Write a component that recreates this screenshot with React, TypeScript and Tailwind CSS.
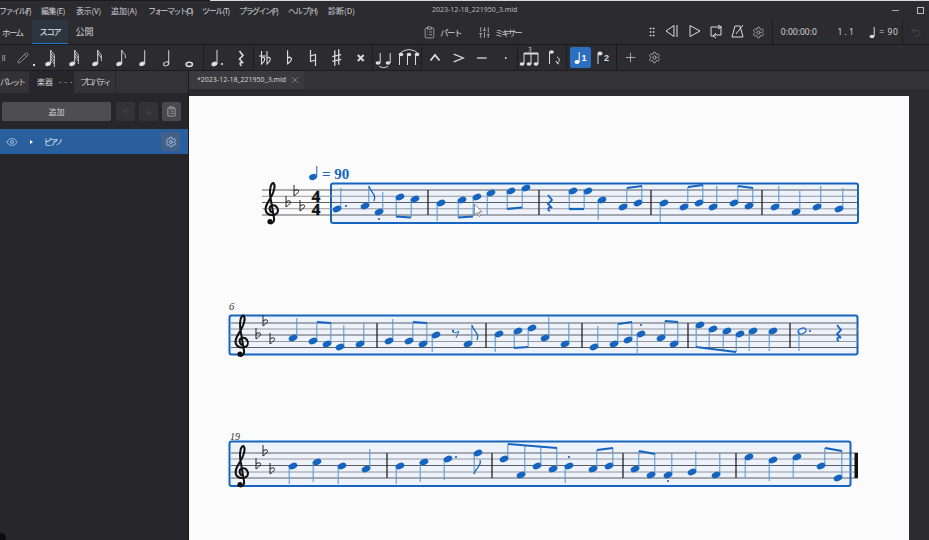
import React from 'react';
import { ArrowDown, ArrowUp, ClipboardList, Eye, GripVertical, Pencil, Plus, Settings, SlidersVertical, X, Undo2 } from 'lucide-react';

const BLUE = '#1565c0';
const STEM = '#5a9ad6';
type N = [number, number, number];
type B = [number, number, number, number];

const notes: N[] = [
  [337,209,188],[365,206,186],[379,212,192],[400,197,216],[415,199,217],
  [441,203,221],[462,200,217],[477,197,216],[491,193,215],[511,191,209],[526,188,208],
  [573,191,209],[588,191,209],[602,200,220],[623,207,188],[638,203,186],
  [664,203,222],[684,207,187],[699,203,185],[713,207,186],[734,203,186],[749,206,188],
  [775,207,186],[796,212,191],[817,207,186],[839,209,188],
  [293,338,318],[313,341,322],[327,344,323],[340,347,325],[360,344,323],
  [389,341,319],[409,341,322],[423,344,323],[436,335,352],[468,344,325],
  [499,334,352],[518,331,348],[532,328,347],[545,338,317],[565,344,323],
  [594,347,326],[614,344,324],[628,340,322],[641,334,353],[661,338,321],[674,344,322],
  [700,325,347],[713,329,349],[727,331,350],[740,334,352],[753,331,351],[773,331,351],
  [293,466,484],[317,462,482],[342,466,484],[366,469,449],
  [400,466,484],[424,462,482],[448,459,480],[478,453,474],
  [504,459,444],[521,475,445],[537,466,446],[553,469,448],[569,466,483],[593,469,450],[609,466,448],
  [635,469,451],[651,475,454],[668,475,453],[692,472,451],[716,475,453],
  [749,457,478],[773,460,481],[797,457,478],[821,466,448],[838,478,451],
];
const beams: B[] = [
  [396,216.5,411,217.5],[458,217.5,473,216.5],[507,209,522,207.5],[569,209,584,209],[627,188,642,186],[688,187,703,185],[738,186,753,188],
  [317,322,331,323],[413,322,427,323],[514,348,528,347],[618,324,632,322],[665,321,678,322],[696,347,736,352],
  [508,444,557,448],[597,450,613,448],[639,451,655,454],[825,448,842,451],
];
const dots: [number, number][] = [[346,206],[379,219],[641,325],[810,331],[456,457],[569,457],[668,481]];
const bars: [number, number, number][] = [
  [428,190,215],[539,190,215],[651,190,215],[762,190,215],
  [377,323,348],[486,323,348],[582,323,348],[688,323,348],[790,323,348],
  [387,453,478],[492,453,478],[623,453,478],[736,453,478],
];

function Clef({ x, y }: { x: number; y: number }) {
  return (
    <g transform={`translate(${x} ${y})`}>
      <path d="M1 3.5C-2.5 3.5-4-2.5 0-3.5C4.5-4.5 7 0 5.5 3.5C3.5 7-4 7-6 2.5C-8.5-3-1.5-9 1-16C3-21 2.8-25 1.5-26C-1-26-2.5-21-1.8-13L2 9C2.8 14-2 16-3.5 13" fill="none" stroke="#111" strokeWidth="2" />
      <circle cx="-2" cy="12.5" r="2.6" fill="#111" />
    </g>
  );
}
function Flat({ x, y }: { x: number; y: number }) {
  return <path d={`M${x - 2} ${y - 7}V${y + 4}C${x + 1} ${y + 2} ${x + 4} ${y - 1} ${x + 2} ${y - 2}C${x + 1} ${y - 2.5} ${x - 1} ${y - 2} ${x - 2} ${y - 1}`} fill="none" stroke="#222" strokeWidth="1" />;
}
function Rest({ x, y }: { x: number; y: number }) {
  return <path d={`M${x - 2} ${y - 8}L${x + 2} ${y - 3}L${x - 2} ${y + 1}L${x + 2} ${y + 5}C${x - 2} ${y + 3} ${x - 3} ${y + 7} ${x} ${y + 8}`} fill="none" stroke={BLUE} strokeWidth="1.8" />;
}

function Score() {
  const staves = [
    { x: 262, end: 858, ys: [190, 196.25, 202.5, 208.75, 215] },
    { x: 231, end: 858, ys: [323, 329, 335, 341.5, 347.5] },
    { x: 231, end: 858, ys: [453, 459, 465.5, 472, 478] },
  ];
  return (
    <svg viewBox="189 96 720 444" width="720" height="444" className="block">
      <rect x="331" y="183.5" width="527" height="39.5" rx="2" fill="#eef2fb" stroke={BLUE} strokeWidth="2" />
      <rect x="229.5" y="315.5" width="628" height="39" rx="2" fill="#eef2fb" stroke={BLUE} strokeWidth="2" />
      <rect x="229.5" y="441.5" width="621" height="44.5" rx="2" fill="#eef2fb" stroke={BLUE} strokeWidth="2" />
      {staves.map((s, i) => s.ys.map((y, j) => <line key={`${i}${j}`} x1={s.x} x2={s.end} y1={y} y2={y} stroke={j % 2 ? '#8a8d92' : '#4c4d50'} strokeWidth="0.9" />))}
      {bars.map(([x, a, b], i) => <line key={i} x1={x} x2={x} y1={a} y2={b} stroke="#222" strokeWidth="1.3" />)}
      <rect x="854.5" y="453" width="3.5" height="25" fill="#111" />
      <Clef x={272} y={209} />
      <Clef x={242} y={341.5} />
      <Clef x={242} y={472} />
      <Flat x={288} y={203} /><Flat x={296} y={192} /><Flat x={302} y={207} />
      <Flat x={258} y={335} /><Flat x={265} y={322} /><Flat x={272} y={340} />
      <Flat x={258} y={465} /><Flat x={265} y={452} /><Flat x={272} y={470} />
      <text x="316" y="202" textAnchor="middle" fontSize="17" fontWeight="700" fill="#111" stroke="#111" strokeWidth="0.5" className="font-['Liberation_Serif',serif]">4</text>
      <text x="316" y="215" textAnchor="middle" fontSize="17" fontWeight="700" fill="#111" stroke="#111" strokeWidth="0.5" className="font-['Liberation_Serif',serif]">4</text>
      <ellipse cx="313" cy="177" rx="4" ry="3" transform="rotate(-22 313 177)" fill={BLUE} />
      <line x1="316.8" x2="316.8" y1="177" y2="166" stroke={BLUE} strokeWidth="1" />
      <text x="322" y="178.5" fontSize="15" fontWeight="700" fill={BLUE} className="font-['Liberation_Serif',serif]">= 90</text>
      <text x="229" y="310" fontSize="10.5" fontStyle="italic" fill="#333" className="font-['Liberation_Serif',serif]">6</text>
      <text x="230" y="440" fontSize="10" fontStyle="italic" fill="#333" className="font-['Liberation_Serif',serif]">19</text>
      {notes.map(([x, y, e], i) => {
        const sx = e < y ? x + 3.8 : x - 3.8;
        return (
          <g key={i}>
            <line x1={sx} x2={sx} y1={y} y2={e} stroke={STEM} strokeWidth="1.1" />
            <ellipse cx={x} cy={y} rx="4.5" ry="3" transform={`rotate(-22 ${x} ${y})`} fill={BLUE} />
          </g>
        );
      })}
      <line x1="799" x2="799" y1="331" y2="351" stroke={STEM} strokeWidth="1.1" />
      <ellipse cx="802" cy="331" rx="4.1" ry="2.7" transform="rotate(-22 802 331)" fill="none" stroke={BLUE} strokeWidth="1.2" />
      {beams.map(([a, b, c, d], i) => <line key={i} x1={a} y1={b} x2={c} y2={d} stroke={BLUE} strokeWidth="2.2" />)}
      {dots.map(([x, y], i) => <circle key={i} cx={x} cy={y} r="1.1" fill={BLUE} />)}
      <path d="M369 186C370 192 377 194 374 201" fill="none" stroke={BLUE} strokeWidth="1.3" />
      <path d="M472 325C473 331 480 333 477 340" fill="none" stroke={BLUE} strokeWidth="1.3" />
      <path d="M474 474C475 469 482 466 480 460" fill="none" stroke={BLUE} strokeWidth="1.3" />
      <Rest x={550} y={203} />
      <Rest x={839} y={333} />
      <circle cx="453" cy="331" r="1.2" fill={BLUE} />
      <path d="M453 332.5C455 333 457 332.5 459 331L456 338" fill="none" stroke={BLUE} strokeWidth="0.9" />
      <path d="M474.5 204V215L477 212.5L479 216.5L480.5 215.5L478.5 212H482Z" fill="#fff" stroke="#666" strokeWidth="0.7" />
    </svg>
  );
}

const C = '#dcdcdc';
function Note({ flags = 0, head = 'fill', dot = false }: { flags?: number; head?: 'fill' | 'open' | 'whole'; dot?: boolean }) {
  return (
    <svg width="24" height="26" viewBox="0 0 24 26" fill="none" stroke={C}>
      {head === 'whole' ? <ellipse cx="10.5" cy="19.5" rx="3.2" ry="2.1" strokeWidth="1.6" /> : <>
        <line x1="13" x2="13" y1="19" y2="5" strokeWidth="1" />
        {head === 'fill' ? <ellipse cx="10.3" cy="19" rx="3" ry="2.2" transform="rotate(-22 10.3 19)" fill={C} stroke="none" /> : <ellipse cx="10.3" cy="19" rx="2.7" ry="1.9" transform="rotate(-22 10.3 19)" strokeWidth="1" />}
      </>}
      {Array.from({ length: flags }).map((_, i) => <path key={i} d={`M13 ${5 + i * 3}C14 ${8 + i * 3} 18 ${9 + i * 3} 16.5 ${13 + i * 3}`} strokeWidth="1" />)}
      {dot && <circle cx="18" cy="19" r="1.1" fill={C} stroke="none" />}
    </svg>
  );
}
function Ico({ d, w = 24, sw = 1.1, fill = 'none' }: { d: string; w?: number; sw?: number; fill?: string }) {
  return <svg width={w} height="26" viewBox={`0 0 ${w} 26`} fill={fill} stroke={C} strokeWidth={sw}><path d={d} /></svg>;
}
const Sep = () => <div className="w-px h-full bg-[#1c1c1f] shrink-0" />;
const Slot = ({ w, children }: { w: string; children?: React.ReactNode }) => <div className={`${w} h-full flex items-center justify-center shrink-0`}>{children}</div>;
const menus = [
  ['ファイル(F)', 'w-[42px] tracking-[-1.5px]'], ['編集(E)', 'w-[35px] tracking-[-0.4px]'], ['表示(V)', 'w-[35px] tracking-[-0.2px]'], ['追加(A)', 'w-[37px]'],
  ['フォーマット(O)', 'w-[54px] tracking-[-1.7px]'], ['ツール(T)', 'w-[37px] tracking-[-1.2px]'], ['プラグイン(P)', 'w-[49px] tracking-[-1.5px]'], ['ヘルプ(H)', 'w-[40px] tracking-[-1px]'], ['診断(D)', 'w-[36px]'],
];

export default function App() {
  return (
    <div className="w-[929px] h-[540px] overflow-hidden flex flex-col bg-[#2b2b30] text-[#d2d2d4] font-['Noto_Sans_CJK_JP','Noto_Sans',sans-serif] relative">
      <div className="h-px flex shrink-0"><div className="w-[210px] bg-[#1c1c1f]" /><div className="flex-1 bg-[#d8d8d8]" /></div>
      <div className="h-[19px] shrink-0 flex items-center text-[8px] relative">
        <div className="flex -ml-px whitespace-nowrap">{menus.map(([m, w]) => <span key={m} className={w}>{m}</span>)}</div>
        <span className="ml-[68px] text-[7px] text-[#b8b8ba] font-['Noto_Sans',sans-serif]">2023-12-18_221950_3.mid</span>
        <div className="ml-auto flex items-center">
          <div className="w-[7px] h-px bg-[#aaa]" />
          <div className="ml-[18px] mr-[5px] w-[7px] h-[7px] border border-[#bbb]" />
        </div>
      </div>
      <div className="h-[25px] shrink-0 flex items-stretch text-[8.5px] border-b border-[#1c1c1f]">
        <div className="w-[32px] flex items-center pl-[2px] whitespace-nowrap tracking-[-1.6px]">ホーム</div>
        <div className="w-[36px] flex items-center justify-center bg-[#2b3641] border-b border-[#2a77c8] text-[#e6e6e6] tracking-[-1.5px]">スコア</div>
        <div className="w-[34px] flex items-center justify-center text-[9px]">公開</div>
        <div className="w-[337px] flex items-center justify-end">
          <ClipboardList size={13} strokeWidth={1.2} />
        </div>
        <div className="w-[42px] flex items-center pl-[4px] tracking-[-1.5px]">パート</div>
        <div className="w-[13px] flex items-center"><SlidersVertical size={13} strokeWidth={1.3} /></div>
        <div className="w-[156px] flex items-center pl-[4px] tracking-[-2px]">ミキサー</div>
        <Slot w="w-[12px]"><GripVertical size={14} strokeWidth={1.8} /></Slot>
        <Slot w="w-[24px]"><Ico d="M14 6.5V17.5L6 12ZM17 6V18" sw={1} w={20} /></Slot>
        <Slot w="w-[22px]"><Ico d="M7 6.5V17.5L17 12Z" sw={1} w={20} /></Slot>
        <Slot w="w-[22px]"><Ico d="M8 17H6V8H16M13 6L16 8L13 10M16 7V16H9M11 14L8 17L11 19" sw={1} w={20} /></Slot>
        <Slot w="w-[22px]"><Ico d="M8 7H13L16 18H5ZM9 15L16 6" sw={1} w={20} /></Slot>
        <Slot w="w-[21px]"><Settings size={13} strokeWidth={1.2} /></Slot>
        <div className="w-[3px] shrink-0" />
        <Sep />
        <div className="w-[65px] flex items-center pl-[8px] font-['Noto_Sans',sans-serif] whitespace-nowrap">0:00:00:0</div>
        <div className="w-[32px] flex items-center font-['Noto_Sans',sans-serif] whitespace-pre">1 . 1</div>
        <div className="w-[33px] flex items-center font-['Noto_Sans',sans-serif] whitespace-pre">
          <svg width="8" height="14" viewBox="0 0 8 14"><ellipse cx="3" cy="11.5" rx="2.4" ry="1.8" fill={C} /><line x1="5.2" x2="5.2" y1="11" y2="2" stroke={C} /></svg>
          <span className="ml-[2px] tracking-[0.6px]">= 90</span>
        </div>
        <Sep />
        <Slot w="w-[26px]"><Undo2 size={12} className="text-[#47474b]" /></Slot>
      </div>
      <div className="h-[26px] shrink-0 flex items-stretch border-b border-[#1c1c1f]">
        <Slot w="w-[7px]"><GripVertical size={14} strokeWidth={1.8} /></Slot>
        <div className="w-[31px] h-full relative flex items-center justify-center shrink-0"><Pencil size={12} strokeWidth={1.1} /><div className="absolute left-[26px] bottom-[4px] w-[2px] h-[2px] bg-[#ddd]" /></div>
        {[4, 3, 2, 1, 0].map(f => <Slot key={f} w="w-[23.5px]"><Note flags={f} /></Slot>)}
        <Slot w="w-[23.5px]"><Note head="open" /></Slot>
        <Slot w="w-[23.5px]"><Note head="whole" /></Slot>
        <Sep />
        <Slot w="w-[24.5px]"><Note dot /></Slot>
        <Slot w="w-[25px]"><Ico d="M10.5 6L14 10.5L10.5 14L14 18C11 16.5 10 19 12.5 21" sw={1.6} /></Slot>
        <Sep />
        <Slot w="w-[24px]"><Ico d="M7.5 6V19C10 17 12 14 10 12.5C9 12 8 12.5 7.5 13.5M13 6V19C15.5 17 17.5 14 15.5 12.5C14.5 12 13.5 12.5 13 13.5M5 11H12" /></Slot>
        <Slot w="w-[23px]"><Ico d="M10 5V19C13 17 15.5 14 13 12.5C12 12 10.5 12.5 10 13.5" sw={1.2} /></Slot>
        <Slot w="w-[24px]"><Ico d="M9.5 5V16.5L14.5 15M9.5 11L14.5 9.5V21" sw={1.2} /></Slot>
        <Slot w="w-[23.5px]"><Ico d="M10 5V21M14 4V20M7.5 11.5L16.5 9.5M7.5 16.5L16.5 14.5" sw={1.3} /></Slot>
        <Slot w="w-[23.5px]"><Ico d="M9 10L15 16M15 10L9 16" sw={2} /></Slot>
        <Sep />
        <Slot w="w-[24px]">
          <svg width="24" height="26" viewBox="0 0 24 26" fill="none" stroke={C}><ellipse cx="5" cy="18" rx="2.4" ry="1.8" fill={C} stroke="none" /><line x1="7.2" x2="7.2" y1="18" y2="8" /><ellipse cx="15" cy="18" rx="2.4" ry="1.8" fill={C} stroke="none" /><line x1="17.2" x2="17.2" y1="18" y2="8" /><path d="M6 21.5Q11 24 15 21.5" strokeWidth="0.9" /></svg>
        </Slot>
        <Slot w="w-[24px]">
          <svg width="24" height="26" viewBox="0 0 24 26" fill="none" stroke={C}><path d="M2 9Q12 0 22 9" strokeWidth="0.9" /><g fill={C} stroke="none"><ellipse cx="4" cy="9.5" rx="2.3" ry="1.7" /><ellipse cx="12" cy="9.5" rx="2.3" ry="1.7" /><ellipse cx="20" cy="9.5" rx="2.3" ry="1.7" /></g><path d="M2.5 9.5V20M10.5 9.5V20M18.5 9.5V20" /></svg>
        </Slot>
        <Sep />
        <Slot w="w-[25px]"><Ico d="M7.5 15.5L12 10L16.5 15.5" sw={1.8} /></Slot>
        <Slot w="w-[23px]"><Ico d="M7 9L17 13L7 17" sw={1.3} /></Slot>
        <Slot w="w-[23.5px]"><Ico d="M7 13H17" sw={1.3} /></Slot>
        <Slot w="w-[23.5px]"><Ico d="M11.3 13H12.7" sw={1.8} /></Slot>
        <Sep />
        <Slot w="w-[24px]">
          <svg width="24" height="26" viewBox="0 0 24 26" fill="none" stroke={C}><text x="12" y="7" fontSize="6" fill={C} stroke="none" textAnchor="middle">3</text><path d="M6 8.5H20" strokeWidth="2" /><path d="M6 8V19M13 8V19M20 8V19" /><g fill={C} stroke="none"><ellipse cx="4" cy="19" rx="2.4" ry="1.8" /><ellipse cx="11" cy="19" rx="2.4" ry="1.8" /><ellipse cx="18" cy="19" rx="2.4" ry="1.8" /></g></svg>
        </Slot>
        <Slot w="w-[24px]">
          <svg width="24" height="26" viewBox="0 0 24 26" fill="none" stroke={C}><ellipse cx="9.5" cy="7" rx="2.4" ry="1.8" fill={C} stroke="none" /><path d="M7.5 7V19" /><path d="M15 12C18 13 18 17 15 18M15 18L14 16M15 18L17 19" /></svg>
        </Slot>
        <Sep />
        <div className="w-[3px] shrink-0" />
        <div className="w-[21px] h-[21px] self-center bg-[#2a6fc0] rounded-[2px] flex items-center justify-center shrink-0">
          <svg width="16" height="16" viewBox="0 0 16 16"><ellipse cx="4" cy="12" rx="2.5" ry="1.9" fill="#fff" /><line x1="6.2" x2="6.2" y1="12" y2="2" stroke="#fff" /><text x="11" y="11" fontSize="9" fontWeight="700" fill="#fff" textAnchor="middle" className="font-['Liberation_Sans',sans-serif]">1</text></svg>
        </div>
        <div className="w-[25px] flex items-center justify-center shrink-0">
          <svg width="16" height="16" viewBox="0 0 16 16"><ellipse cx="4" cy="3.5" rx="2.5" ry="1.9" fill={C} /><line x1="2" x2="2" y1="4" y2="14" stroke={C} /><text x="10.5" y="11" fontSize="9" fontWeight="700" fill={C} textAnchor="middle" className="font-['Liberation_Sans',sans-serif]">2</text></svg>
        </div>
        <Sep />
        <Slot w="w-[27px]"><Plus size={15} strokeWidth={1.1} className="text-[#dcdcdc]" /></Slot>
        <Slot w="w-[20px]"><Settings size={13} strokeWidth={1.2} className="text-[#dcdcdc]" /></Slot>
      </div>
      <div className="flex-1 flex min-h-0">
        <div className="w-[189px] shrink-0 flex flex-col bg-[#27272b] border-r border-[#1c1c1f]">
          <div className="h-[22px] shrink-0 flex bg-[#333337] text-[8px]">
            <div className="w-[29px] flex items-center whitespace-nowrap overflow-hidden tracking-[-2px]">パレット</div>
            <div className="w-[44px] flex items-center pl-[8px] gap-[5px] bg-[#27272b] whitespace-nowrap"><span>楽器</span><span className="tracking-[1px]">···</span></div>
            <div className="w-[43px] flex items-center pl-[6px] border-x border-[#26262a] whitespace-nowrap tracking-[-2px]">プロパティ</div>
          </div>
          <div className="flex gap-[4px] pl-[2px] pt-[9px]">
            <div className="w-[109px] h-[19px] rounded-[2px] bg-[#4e4e52] text-[8px] flex items-center justify-center">追加</div>
            <div className="ml-[1px] w-[19px] h-[19px] rounded-[2px] bg-[#333337] flex items-center justify-center"><ArrowUp size={10} className="text-[#49494d]" /></div>
            <div className="w-[19px] h-[19px] rounded-[2px] bg-[#333337] flex items-center justify-center"><ArrowDown size={10} className="text-[#49494d]" /></div>
            <div className="w-[19px] h-[19px] rounded-[2px] bg-[#4a4a4e] flex items-center justify-center"><ClipboardList size={11} strokeWidth={1.3} /></div>
          </div>
          <div className="mt-[8px] h-[25px] bg-[#2a5f9e] flex items-center text-[8px] text-[#e4ebf4]">
            <div className="w-[26px] flex justify-center -translate-x-px"><Eye size={12} strokeWidth={1.2} /></div>
            <div className="w-[18px] pl-[4px]"><div className="w-0 h-0 border-y-[2.5px] border-y-transparent border-l-[3.5px] border-l-white" /></div>
            <span className="tracking-[-2px]">ピアノ</span>
            <div className="ml-auto mr-[8px] w-[19px] h-[19px] rounded-[2px] bg-[#41618a] flex items-center justify-center"><Settings size={12} strokeWidth={1.2} /></div>
          </div>
          <div className="flex-1 relative"><div className="absolute left-[-4px] bottom-[-3px] w-[10px] h-[10px] rounded-full bg-[#0d0d0f]" /></div>
        </div>
        <div className="flex-1 min-w-0 flex flex-col">
          <div className="h-[18px] shrink-0 bg-[#333338] flex">
            <div className="w-[115px] bg-[#3a3a3f] flex items-center pl-[8px] text-[7px] font-['Noto_Sans',sans-serif] whitespace-nowrap">
              *2023-12-18_221950_3.mid
              <X size={10} strokeWidth={1} className="ml-[4px]" />
            </div>
          </div>
          <div className="h-[7px] shrink-0 bg-[#2b2b30]" />
          <div className="flex-1 min-h-0 flex">
            <div className="w-[720px] shrink-0 bg-[#fbfbfc]"><Score /></div>
          </div>
        </div>
      </div>
    </div>
  );
}
